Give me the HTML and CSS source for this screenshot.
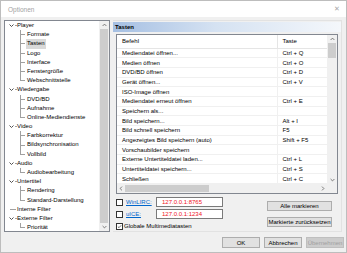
FILE: index.html
```html
<!DOCTYPE html>
<html>
<head>
<meta charset="utf-8">
<title>Optionen</title>
<link rel="stylesheet" href="styles.css">
</head>
<body>
<div class="window">
  <div class="titlebar">
    <span class="title">Optionen</span>
    <span class="close">✕</span>
  </div>
  <div class="main">
    <div class="tree">
      <ul class="nodes">
        <li class="root"><svg class="exp" viewBox="0 0 5 5"><path d="M0.5 1.5l2 2 2-2"/></svg>Player</li>
        <li class="child">Formate</li>
        <li class="child"><span class="sel">Tasten</span></li>
        <li class="child">Logo</li>
        <li class="child">Interface</li>
        <li class="child">Fenstergröße</li>
        <li class="child last">Webschnittstelle</li>
        <li class="root"><svg class="exp" viewBox="0 0 5 5"><path d="M0.5 1.5l2 2 2-2"/></svg>Wiedergabe</li>
        <li class="child">DVD/BD</li>
        <li class="child">Aufnahme</li>
        <li class="child last">Online-Mediendienste</li>
        <li class="root"><svg class="exp" viewBox="0 0 5 5"><path d="M0.5 1.5l2 2 2-2"/></svg>Video</li>
        <li class="child">Farbkorrektur</li>
        <li class="child">Bildsynchronisation</li>
        <li class="child last">Vollbild</li>
        <li class="root"><svg class="exp" viewBox="0 0 5 5"><path d="M0.5 1.5l2 2 2-2"/></svg>Audio</li>
        <li class="child last">Audiobearbeitung</li>
        <li class="root"><svg class="exp" viewBox="0 0 5 5"><path d="M0.5 1.5l2 2 2-2"/></svg>Untertitel</li>
        <li class="child">Rendering</li>
        <li class="child last">Standard-Darstellung</li>
        <li class="leaf">Interne Filter</li>
        <li class="root"><svg class="exp" viewBox="0 0 5 5"><path d="M0.5 1.5l2 2 2-2"/></svg>Externe Filter</li>
        <li class="child last">Priorität</li>
      </ul>
      <div class="vbar">
        <svg class="arrow" viewBox="0 0 5 4"><path d="M0.6 3l1.9-1.9 1.9 1.9"/></svg>
        <div class="track tree-track"><div class="thumb"></div></div>
        <svg class="arrow" viewBox="0 0 5 4"><path d="M0.6 1l1.9 1.9 1.9-1.9"/></svg>
      </div>
    </div>

    <div class="page">
      <div class="page-head">Tasten</div>
      <div class="grid">
        <div class="grid-view">
          <table class="keys">
            <colgroup><col class="c-cmd"><col class="c-key"></colgroup>
            <thead>
              <tr><th>Befehl</th><th>Taste</th></tr>
            </thead>
            <tbody>
              <tr><td>Mediendatei öffnen...</td><td>Ctrl + Q</td></tr>
              <tr><td>Medien öffnen</td><td>Ctrl + O</td></tr>
              <tr><td>DVD/BD öffnen</td><td>Ctrl + D</td></tr>
              <tr><td>Gerät öffnen...</td><td>Ctrl + V</td></tr>
              <tr><td>ISO-Image öffnen</td><td></td></tr>
              <tr><td>Mediendatei erneut öffnen</td><td>Ctrl + E</td></tr>
              <tr><td>Speichern als...</td><td></td></tr>
              <tr><td>Bild speichern...</td><td>Alt + I</td></tr>
              <tr><td>Bild schnell speichern</td><td>F5</td></tr>
              <tr><td>Angezeigtes Bild speichern (auto)</td><td>Shift + F5</td></tr>
              <tr><td>Vorschaubilder speichern</td><td></td></tr>
              <tr><td>Externe Untertiteldatei laden...</td><td>Ctrl + L</td></tr>
              <tr><td>Untertiteldatei speichern...</td><td>Ctrl + S</td></tr>
              <tr><td>Schließen</td><td>Ctrl + C</td></tr>
            </tbody>
          </table>
        </div>
        <div class="vbar">
          <svg class="arrow" viewBox="0 0 5 4"><path d="M0.6 3l1.9-1.9 1.9 1.9"/></svg>
          <div class="track"><div class="thumb grid-thumb"></div></div>
          <svg class="arrow" viewBox="0 0 5 4"><path d="M0.6 1l1.9 1.9 1.9-1.9"/></svg>
        </div>
        <div class="hbar">
          <svg class="arrow" viewBox="0 0 4 5"><path d="M3 0.6l-1.9 1.9 1.9 1.9"/></svg>
          <div class="htrack"><div class="hthumb"></div></div>
          <svg class="arrow" viewBox="0 0 4 5"><path d="M1 0.6l1.9 1.9-1.9 1.9"/></svg>
        </div>
        <div class="corner"></div>
      </div>

      <div class="remote">
        <div class="fields">
          <div class="field">
            <span class="box"></span>
            <a class="link" href="#">WinLIRC:</a>
            <span class="edit">127.0.0.1:8765</span>
          </div>
          <div class="field">
            <span class="box"></span>
            <a class="link" href="#">uICE:</a>
            <span class="edit">127.0.0.1:1234</span>
          </div>
          <div class="field check">
            <span class="box"><svg viewBox="0 0 7 7"><path d="M1.2 3.6l1.6 1.6 3-3.4"/></svg></span>
            <span>Globale Multimediatasten</span>
          </div>
        </div>
        <div class="side-buttons">
          <button class="btn wide">Alle markieren</button>
          <button class="btn wide">Markierte zurücksetzen</button>
        </div>
      </div>
    </div>
  </div>

  <div class="footer">
    <button class="btn">OK</button>
    <button class="btn">Abbrechen</button>
    <button class="btn" disabled>Übernehmen</button>
  </div>
</div>
</body>
</html>
```

FILE: styles.css
```css
* {
    box-sizing: border-box;
}
body {
    margin: 0;
    font-family: "Liberation Sans", Arial, sans-serif;
    font-size: 6px;
    color: #000;
    background: #fff;
}
.window {
    width: 347px;
    height: 253px;
    border: 1px solid #bdbdbd;
    background: #f0f0f0;
    display: flex;
    flex-direction: column;
}

/* title */
.titlebar {
    height: 16px;
    background: #fff;
    display: flex;
    align-items: center;
    justify-content: space-between;
    padding: 0 6px 0 7px;
    color: #a3a3a3;
    font-size: 6.5px;
}
.close {
    font-size: 7px;
    color: #a8a8a8;
}

.main {
    display: flex;
    gap: 3px;
    height: 215px;
    padding: 3px 4px 0 3px;
}

/* tree */
.tree {
    width: 106px;
    height: 212px;
    border: 1px solid #828790;
    background: #fff;
    display: flex;
    overflow: hidden;
}
.nodes {
    flex: 1;
    margin: 0;
    padding: 0;
    list-style: none;
}
.nodes li {
    height: 9.2px;
    line-height: 9.2px;
    white-space: nowrap;
}
.root {
    display: flex;
    align-items: center;
    padding-left: 4px;
    background: linear-gradient(#a0a0a0, #a0a0a0) 10px 50% / 2px 1px no-repeat;
}
.exp {
    width: 5px;
    height: 5px;
    margin-right: 3px;
    fill: none;
    stroke: #3c3c3c;
    stroke-width: 0.9;
}
.leaf {
    padding-left: 12px;
    background: linear-gradient(#a0a0a0, #a0a0a0) 5px 50% / 6px 1px no-repeat;
}
.child {
    padding-left: 22px;
    background:
        linear-gradient(#a0a0a0, #a0a0a0) 15px 0 / 1px 100% no-repeat,
        linear-gradient(#a0a0a0, #a0a0a0) 15px 50% / 5px 1px no-repeat;
}
.child.last {
    background:
        linear-gradient(#a0a0a0, #a0a0a0) 15px 0 / 1px 50% no-repeat,
        linear-gradient(#a0a0a0, #a0a0a0) 15px 50% / 5px 1px no-repeat;
}
.sel {
    display: inline-block;
    background: #d9d9d9;
    padding: 0 1px;
    margin-left: -1px;
}

/* scrollbars */
.vbar {
    width: 10px;
    background: #f0f0f0;
    display: flex;
    flex-direction: column;
    align-items: center;
}
.arrow {
    width: 5px;
    height: 8px;
    padding: 2px 0;
    fill: none;
    stroke: #606060;
    stroke-width: 0.8;
    flex: none;
}
.track {
    flex: 1;
    width: 100%;
    padding: 0 1px;
}
.thumb {
    height: 15px;
    background: #cdcdcd;
}
.tree-track .thumb {
    height: 194px;
}

/* right page */
.page {
    width: 229px;
    height: 212px;
    border: 1px solid #e2e2e2;
    border-left: none;
    display: flex;
    flex-direction: column;
}
.page-head {
    height: 10px;
    line-height: 10px;
    margin-top: 1px;
    padding-left: 2px;
    font-weight: bold;
    background: linear-gradient(to right, #a5bfe2, #d5e2f2 45%, #f4f7fb);
}
.grid {
    height: 160px;
    margin: 2px 3px 0 3px;
    border: 1px solid #828790;
    background: #fff;
    display: grid;
    grid-template-columns: 210px 10px;
    grid-template-rows: 149px 9px;
}
.grid-view {
    overflow: hidden;
}
.keys {
    width: 210px;
    table-layout: fixed;
    border-collapse: collapse;
}
.c-cmd {
    width: 160px;
}
.c-key {
    width: 50px;
}
.keys th {
    height: 13px;
    padding: 0 5px;
    text-align: left;
    font-weight: normal;
    border-bottom: 1px solid #e5e5e5;
    border-right: 1px solid #e5e5e5;
}
.keys td {
    height: 9.7px;
    padding: 0 5px;
    line-height: 1;
    white-space: nowrap;
    overflow: hidden;
    border-bottom: 1px solid #f0f0f0;
}
.keys td:first-child {
    border-right: 1px solid #f0f0f0;
}
.hbar {
    display: flex;
    align-items: center;
    background: #f0f0f0;
}
.hbar .arrow {
    width: 8px;
    height: 5px;
    padding: 0 2px;
}
.htrack {
    flex: 1;
    height: 100%;
    padding: 1px 0;
}
.hthumb {
    width: 84px;
    height: 100%;
    background: #cdcdcd;
}
.corner {
    background: #f0f0f0;
}

/* remote control */
.remote {
    display: flex;
    justify-content: space-between;
    padding: 3px 9px 0 3px;
}
.fields {
    display: flex;
    flex-direction: column;
    gap: 2px;
}
.field {
    display: flex;
    align-items: center;
    height: 10px;
}
.box {
    width: 7px;
    height: 7px;
    margin-right: 3px;
    border: 1px solid #333;
    background: #fff;
    display: flex;
}
.box svg {
    width: 100%;
    height: 100%;
    fill: none;
    stroke: #222;
    stroke-width: 0.9;
}
.check .box {
    margin-right: 1px;
}
.link {
    width: 30px;
    color: #0066cc;
    text-decoration: underline;
}
.edit {
    width: 67px;
    height: 10px;
    line-height: 8px;
    padding-left: 5px;
    border: 1px solid #7a7a7a;
    background: #fff;
    color: #f0141e;
}
.side-buttons {
    display: flex;
    flex-direction: column;
    gap: 6px;
    padding-top: 4px;
}

/* buttons */
.btn {
    height: 11px;
    width: 38px;
    padding: 0;
    font-family: inherit;
    font-size: 6px;
    color: #000;
    background: #e1e1e1;
    border: 1px solid #adadad;
}
.btn.wide {
    width: 65px;
    height: 10px;
}
.btn:disabled {
    color: #a0a0a0;
    background: #cccccc;
    border-color: #bfbfbf;
}
.footer {
    display: flex;
    justify-content: flex-end;
    gap: 4px;
    padding: 5px 2px 0 0;
}
```
